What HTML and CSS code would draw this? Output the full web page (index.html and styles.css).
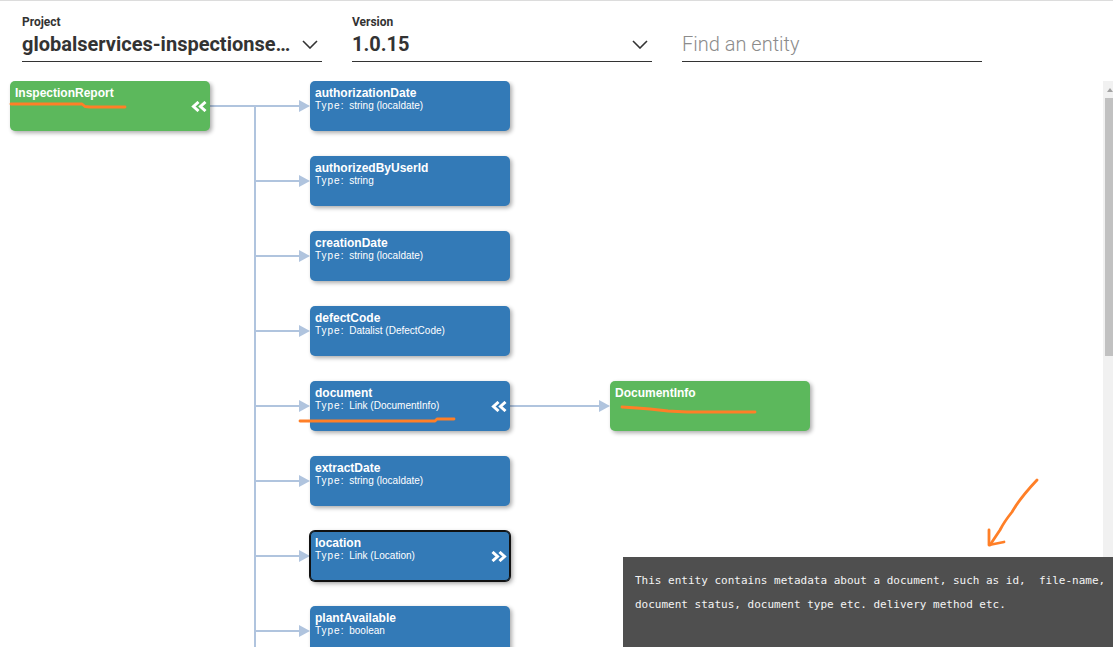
FILE: index.html
```html
<!DOCTYPE html>
<html>
<head>
<meta charset="utf-8">
<title>Entity explorer</title>
<link rel="stylesheet" href="styles.css">
</head>
<body>
<header class="toolbar">
  <div class="field">
    <div class="label">Project</div>
    <div class="control">
      <span class="value">globalservices-inspectionse…</span>
      <svg class="chev" width="16" height="9" viewBox="0 0 16 9"><path d="M1 1 L8 8 L15 1" fill="none" stroke="#333" stroke-width="1.6"/></svg>
    </div>
  </div>
  <div class="field">
    <div class="label">Version</div>
    <div class="control">
      <span class="value">1.0.15</span>
      <svg class="chev" width="16" height="9" viewBox="0 0 16 9"><path d="M1 1 L8 8 L15 1" fill="none" stroke="#333" stroke-width="1.6"/></svg>
    </div>
  </div>
  <div class="field search">
    <input class="search-input" type="text" placeholder="Find an entity">
  </div>
</header>

<main class="diagram">
  <div class="canvas">
    <svg class="wires" width="1103" height="566" viewBox="0 81 1103 566">
      <g stroke="#b0c4de" stroke-width="2" fill="none">
        <line x1="210" y1="106" x2="300" y2="106"/>
        <line x1="255" y1="106" x2="255" y2="660"/>
        <line x1="255" y1="181" x2="300" y2="181"/>
        <line x1="255" y1="256" x2="300" y2="256"/>
        <line x1="255" y1="331" x2="300" y2="331"/>
        <line x1="255" y1="406" x2="300" y2="406"/>
        <line x1="255" y1="481" x2="300" y2="481"/>
        <line x1="255" y1="556" x2="300" y2="556"/>
        <line x1="255" y1="631" x2="300" y2="631"/>
        <line x1="510" y1="406" x2="600" y2="406"/>
      </g>
      <g fill="#b0c4de">
        <polygon points="299,100 310,106 299,112"/>
        <polygon points="299,175 310,181 299,187"/>
        <polygon points="299,250 310,256 299,262"/>
        <polygon points="299,325 310,331 299,337"/>
        <polygon points="299,400 310,406 299,412"/>
        <polygon points="299,475 310,481 299,487"/>
        <polygon points="299,550 310,556 299,562"/>
        <polygon points="299,625 310,631 299,637"/>
        <polygon points="599,400 610,406 599,412"/>
      </g>
    </svg>

    <div class="grid">
      <div class="node entity c1 r1">
        <div class="text"><div class="name">InspectionReport</div></div>
        <svg class="arrows" width="16" height="11" viewBox="0 0 16 11"><path d="M7.5 1 L2.5 5.5 L7.5 10 M14.5 1 L9.5 5.5 L14.5 10" fill="none" stroke="#fff" stroke-width="3"/></svg>
      </div>

      <div class="node field-node c3 r1">
        <div class="text"><div class="name">authorizationDate</div><div class="type"><span class="k">Type:</span> string (localdate)</div></div>
      </div>
      <div class="node field-node c3 r2">
        <div class="text"><div class="name">authorizedByUserId</div><div class="type"><span class="k">Type:</span> string</div></div>
      </div>
      <div class="node field-node c3 r3">
        <div class="text"><div class="name">creationDate</div><div class="type"><span class="k">Type:</span> string (localdate)</div></div>
      </div>
      <div class="node field-node c3 r4">
        <div class="text"><div class="name">defectCode</div><div class="type"><span class="k">Type:</span> Datalist (DefectCode)</div></div>
      </div>
      <div class="node field-node c3 r5">
        <div class="text"><div class="name">document</div><div class="type"><span class="k">Type:</span> Link (DocumentInfo)</div></div>
        <svg class="arrows" width="16" height="11" viewBox="0 0 16 11"><path d="M7.5 1 L2.5 5.5 L7.5 10 M14.5 1 L9.5 5.5 L14.5 10" fill="none" stroke="#fff" stroke-width="3"/></svg>
      </div>
      <div class="node field-node c3 r6">
        <div class="text"><div class="name">extractDate</div><div class="type"><span class="k">Type:</span> string (localdate)</div></div>
      </div>
      <div class="node field-node selected c3 r7">
        <div class="text"><div class="name">location</div><div class="type"><span class="k">Type:</span> Link (Location)</div></div>
        <svg class="arrows" width="16" height="11" viewBox="0 0 16 11"><path d="M1.5 1 L6.5 5.5 L1.5 10 M8.5 1 L13.5 5.5 L8.5 10" fill="none" stroke="#fff" stroke-width="3"/></svg>
      </div>
      <div class="node field-node c3 r8">
        <div class="text"><div class="name">plantAvailable</div><div class="type"><span class="k">Type:</span> boolean</div></div>
      </div>

      <div class="node entity c5 r5">
        <div class="text"><div class="name">DocumentInfo</div></div>
      </div>
    </div>
  </div>
  <div class="scrollbar">
    <div class="sb-button"><svg width="6" height="4" viewBox="0 0 6 4"><polygon points="3,0 6,4 0,4" fill="#a3a3a3"/></svg></div>
    <div class="sb-thumb"></div>
  </div>
</main>

<div class="tooltip">
  <div class="tip-line">This entity contains metadata about a document, such as id,  file-name,</div>
  <div class="tip-line">document status, document type etc. delivery method etc.</div>
</div>

<svg class="marks" width="1113" height="647" viewBox="0 0 1113 647">
  <g fill="none" stroke="#ff7f27" stroke-width="2.8" stroke-linejoin="round" stroke-linecap="round">
    <path d="M11 104 L82 104 L85 106.5 L90 107 L125 107"/>
    <path d="M300 421 L435 421 L437 419 L454 419"/>
    <path d="M622 407 L637 408 L650 409 L668 411 L687 412 L755 412"/>
    <path d="M1037 480 Q1020 498 1012 512 Q1004 522 1000 530 L990 545"/>
    <path d="M989 530 L989 545 L1004 542"/>
  </g>
</svg>
</body>
</html>
```

FILE: styles.css
```css
html, body {
  margin: 0;
  padding: 0;
}

body {
  width: 1113px;
  height: 647px;
  overflow: hidden;
  background: #ffffff;
  font-family: Roboto, "Liberation Sans", Arial, sans-serif;
  position: relative;
}

/* ---------- toolbar ---------- */
.toolbar {
  box-sizing: border-box;
  height: 81px;
  border-top: 1px solid #dcdcdc;
  padding: 14px 0 0 22px;
  display: flex;
  gap: 30px;
}

.field {
  width: 300px;
  display: flex;
  flex-direction: column;
}

.label {
  font-size: 12px;
  line-height: 14px;
  font-weight: 700;
  color: #333333;
}

.control {
  margin-top: 3px;
  display: flex;
  align-items: center;
  justify-content: space-between;
  padding-bottom: 5px;
  border-bottom: 1px solid #333333;
}

.value {
  font-size: 20px;
  line-height: 24px;
  font-weight: 700;
  color: #333333;
  white-space: nowrap;
}

.chev {
  margin-right: 4px;
  flex: none;
}

.search {
  justify-content: flex-start;
}

.search-input {
  margin-top: 15px;
  box-sizing: border-box;
  width: 300px;
  height: 32px;
  padding: 2px 0 6px 0;
  border: none;
  border-bottom: 1px solid #333333;
  outline: none;
  background: transparent;
  font-family: Roboto, "Liberation Sans", Arial, sans-serif;
  font-weight: 300;
  font-size: 20px;
  line-height: 24px;
  color: #333333;
}

.search-input::placeholder {
  color: #8c8c8c;
  opacity: 1;
}

/* ---------- diagram ---------- */
.diagram {
  display: flex;
  height: 566px;
}

.canvas {
  flex: 1;
  position: relative;
  overflow: hidden;
  padding-left: 10px;
}

.wires {
  position: absolute;
  left: 0;
  top: 0;
}

.grid {
  position: relative;
  display: grid;
  grid-template-columns: 200px 100px 200px 100px 200px;
  grid-auto-rows: 50px;
  row-gap: 25px;
}

.c1 { grid-column: 1; }
.c3 { grid-column: 3; }
.c5 { grid-column: 5; }
.r1 { grid-row: 1; }
.r2 { grid-row: 2; }
.r3 { grid-row: 3; }
.r4 { grid-row: 4; }
.r5 { grid-row: 5; }
.r6 { grid-row: 6; }
.r7 { grid-row: 7; }
.r8 { grid-row: 8; }

.node {
  box-sizing: border-box;
  height: 50px;
  border-radius: 5px;
  padding: 5px 3px 4px 5px;
  display: flex;
  align-items: flex-start;
  color: #ffffff;
  font-family: "Liberation Sans", Arial, sans-serif;
  box-shadow: 2px 2px 4px rgba(0, 0, 0, 0.33);
}

.entity {
  background: #5cb85c;
}

.field-node {
  background: #337ab7;
}

.selected {
  box-shadow: 0 0 0 1px #111111, inset 0 0 0 1px #111111, 2px 2px 5px rgba(0, 0, 0, 0.45);
}

.text {
  flex: 1;
  min-width: 0;
}

.name {
  font-size: 12px;
  line-height: 14px;
  font-weight: 700;
}

.type {
  font-size: 10px;
  line-height: 12px;
}

.type .k {
  letter-spacing: 1px;
  margin-right: 2px;
}

.arrows {
  align-self: center;
  flex: none;
  margin-top: 0;
}

/* ---------- scrollbar ---------- */
.scrollbar {
  width: 10px;
  background: #f1f1f1;
  display: flex;
  flex-direction: column;
}

.sb-button {
  height: 17px;
  display: flex;
  align-items: center;
  justify-content: flex-end;
}

.sb-thumb {
  margin-left: 2px;
  height: 258px;
  background: #c1c1c1;
}

/* ---------- tooltip ---------- */
.tooltip {
  position: absolute;
  left: 623px;
  top: 557px;
  width: 490px;
  height: 90px;
  box-sizing: border-box;
  padding: 12px 0 0 12px;
  background: #4f4f4f;
  color: #f4f4f4;
  font-family: "DejaVu Sans Mono", "Liberation Mono", monospace;
  font-size: 11px;
  line-height: 24px;
  overflow: hidden;
}

.tip-line {
  white-space: pre;
}

/* ---------- annotation marks ---------- */
.marks {
  position: absolute;
  left: 0;
  top: 0;
  pointer-events: none;
}
```
